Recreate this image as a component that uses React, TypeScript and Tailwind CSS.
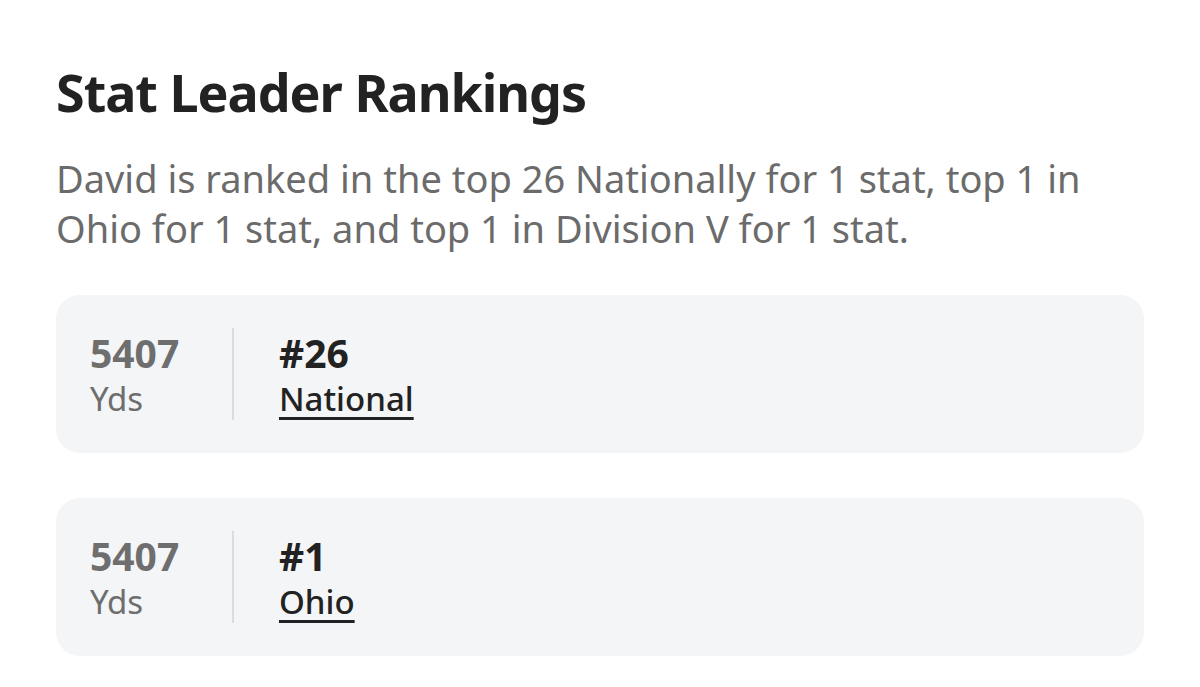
const rankings = [
  { value: "5407", unit: "Yds", rank: "#26", scope: "National" },
  { value: "5407", unit: "Yds", rank: "#1", scope: "Ohio" },
];

function RankCard({ value, unit, rank, scope }: (typeof rankings)[number]) {
  return (
    <div className="flex items-center rounded-[24px] bg-[#f4f5f7] h-[158px] px-[34px] pt-[4px]">
      <div className="flex flex-col w-[142px]">
        <span className="text-[39px] font-bold leading-[45px] text-[#6e6e6e]">{value}</span>
        <span className="text-[33px] leading-[47px] text-[#6e6e6e]">{unit}</span>
      </div>
      <div className="w-[2px] h-[92px] bg-[#dcdcdc] -mt-[4px]" />
      <div className="flex flex-col pl-[45px]">
        <span className="text-[39px] font-bold leading-[45px] text-[#222]">{rank}</span>
        <a href="#" className="text-[33px] font-medium leading-[47px] text-[#222] underline underline-offset-[6px] decoration-[3px]">
          {scope}
        </a>
      </div>
    </div>
  );
}

export default function App() {
  return (
    <div className="w-[1200px] h-[687px] bg-white overflow-hidden px-[56px] pt-[60px] font-['Noto_Sans',sans-serif]">
      <h1 className="text-[52px] font-bold leading-[64px] text-[#222] tracking-[-1px]">Stat Leader Rankings</h1>
      <p className="mt-[29px] text-[38px] leading-[50px] text-[#6b6b6b]">
        David is ranked in the top 26 Nationally for 1 stat, top 1 in Ohio for 1 stat, and top 1 in Division V for 1 stat.
      </p>
      <div className="flex flex-col gap-[45px] mt-[42px] w-[1088px]">
        {rankings.map((r) => (
          <RankCard key={r.scope} {...r} />
        ))}
      </div>
    </div>
  );
}
